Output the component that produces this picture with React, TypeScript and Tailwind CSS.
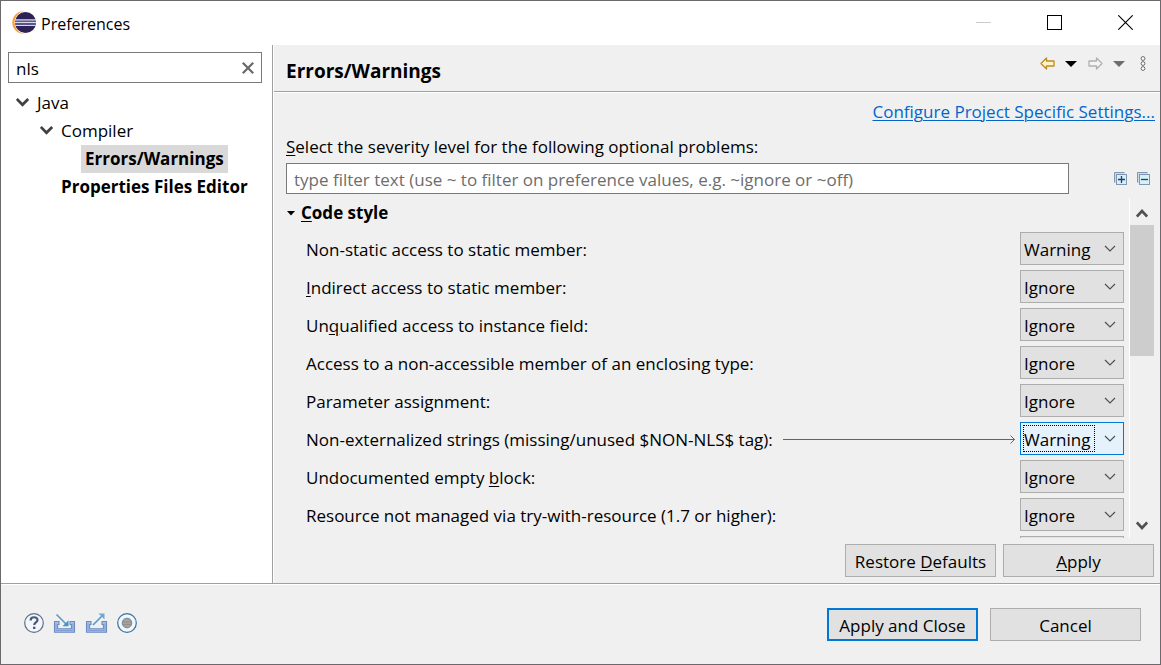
import { useState, type ReactNode } from "react";

type Severity = "Error" | "Warning" | "Info" | "Ignore";

interface Problem {
  id: string;
  label?: ReactNode;
  name?: string;
  severity: Severity;
  focused?: boolean;
}

const problems: Problem[] = [
  { id: "static", label: "Non-static access to static member:", severity: "Warning" },
  { id: "indirect", label: <><Mnemonic>I</Mnemonic>ndirect access to static member:</>, severity: "Ignore" },
  { id: "unqualified", label: <>Un<Mnemonic>q</Mnemonic>ualified access to instance field:</>, severity: "Ignore" },
  { id: "enclosing", label: "Access to a non-accessible member of an enclosing type:", severity: "Ignore" },
  { id: "parameter", label: "Parameter assignment:", severity: "Ignore" },
  { id: "nls", label: "Non-externalized strings (missing/unused $NON-NLS$ tag):", severity: "Warning", focused: true },
  { id: "empty", label: <>Undocumented empty <Mnemonic>b</Mnemonic>lock:</>, severity: "Ignore" },
  { id: "resource", label: "Resource not managed via try-with-resource (1.7 or higher):", severity: "Ignore" },
  { id: "catch", name: "Hidden catch block", severity: "Ignore" },
];

function Mnemonic({ children }: { children: ReactNode }) {
  return <span className="underline decoration-1 underline-offset-2">{children}</span>;
}

function EclipseLogo() {
  return (
    <svg width="24" height="24" viewBox="0 0 24 24" aria-hidden="true">
      <circle cx="11.600" cy="11.500" r="11.300" fill="#f9a03c" />
      <circle cx="14" cy="11.500" r="11.400" fill="#fff" />
      <circle cx="13.500" cy="11.500" r="10.500" fill="#2c2255" />
      <path d="M3.200 9h20.600M3 11.700h21M3.200 14.400h20.600" stroke="#dad8e8" strokeWidth="1.300" />
      <path d="M3 10.400h21M3 13.100h21" stroke="#5d5a96" strokeWidth="1.100" />
    </svg>
  );
}

function TreeChevron() {
  return (
    <svg width="14" height="10" viewBox="0 0 14 10" aria-hidden="true">
      <path d="M.8 1 6.500 6.800 12.200 1" fill="none" stroke="#404040" strokeWidth="2.700" />
    </svg>
  );
}

function HistoryArrow({ stroke, fill, flip }: { stroke: string; fill: string; flip?: boolean }) {
  return (
    <svg width="15" height="13" viewBox="0 0 15 13" aria-hidden="true">
      <path
        d={flip ? "M14 6.500 8.500 1v3H1v5h7.500v3Z" : "M1 6.500 6.500 1v3H14v5H6.500v3Z"}
        fill={fill}
        stroke={stroke}
        strokeWidth="1.300"
        strokeLinejoin="round"
      />
    </svg>
  );
}

function Triangle({ color }: { color: string }) {
  return (
    <svg width="12" height="6" viewBox="0 0 12 6" aria-hidden="true">
      <path d="M0 0h12L6 6Z" fill={color} />
    </svg>
  );
}

function TreeToggleIcon({ plus }: { plus?: boolean }) {
  return (
    <svg width="13" height="13" viewBox="0 0 13 13" aria-hidden="true">
      <path d="M.5 10.500V.5h10" fill="none" stroke="#8296b4" />
      <path d="M1 1h10v1H2v9H1Z" fill="#c9dcea" />
      <rect x="2.500" y="2.500" width="10" height="10" fill="#d8eff5" stroke="#8296b4" />
      <path d={plus ? "M4 7.500h7M7.500 4v7" : "M4 7.500h7"} stroke="#12447c" strokeWidth="1.300" />
    </svg>
  );
}

function ScrollChevron({ up }: { up?: boolean }) {
  return (
    <svg width="12" height="9" viewBox="0 0 12 9" aria-hidden="true">
      <path d={up ? "M.8 7.500 6 2l5.200 5.500" : "M.8 1.500 6 7l5.200-5.500"} fill="none" stroke="#505050" strokeWidth="2.700" />
    </svg>
  );
}

function TrayIcon({ out }: { out?: boolean }) {
  return (
    <svg width="23" height="20" viewBox="0 0 23 20" aria-hidden="true">
      <path
        d="M1.500 8.500H6v3H4.600v4.200h13.800v-4.200H17v-3h4.500v10.800h-20Z"
        fill="#a9bfe3"
        stroke="#6b8cc4"
        strokeWidth="1.100"
      />
      <path d="M3 10.500v7h17v-7" fill="none" stroke="#7f9bd0" strokeWidth=".9" />
      {out ? (
        <>
          <path d="M8 12 17.500 2.500" stroke="#5b9dcb" strokeWidth="1.700" />
          <path d="M13.500.5h6v6L17.500 4.500 15.500 2.500Z" fill="#6fa9d2" />
        </>
      ) : (
        <>
          <path d="M3.500 1.500 13.500 11.500" stroke="#5b9dcb" strokeWidth="1.700" />
          <path d="M9.500 13.300h6v-6l-2 2-2 2Z" fill="#4a91c4" />
        </>
      )}
    </svg>
  );
}

function HelpIcon() {
  return (
    <svg width="20" height="20" viewBox="0 0 20 20" aria-hidden="true">
      <circle cx="10" cy="10" r="9.300" fill="#f4f6f9" stroke="#5b6f8e" strokeWidth="1.200" />
      <path d="M6.600 7.400C6.600 3.200 13.500 3.300 13.500 7c0 2.400-3.300 2.500-3.300 5.100" fill="none" stroke="#47597f" strokeWidth="2.200" />
      <rect x="9" y="13.700" width="2.400" height="2.300" fill="#47597f" />
    </svg>
  );
}

function RecordIcon() {
  return (
    <svg width="20" height="20" viewBox="0 0 20 20" aria-hidden="true">
      <circle cx="10" cy="10" r="9.300" fill="#f1f7fc" stroke="#36719f" strokeWidth="1.200" />
      <circle cx="10" cy="10" r="4.800" fill="#a3a3a3" stroke="#858585" />
      <path d="M6 9h8M6 11.500h8" stroke="#8c8c8c" strokeWidth=".8" />
    </svg>
  );
}

function PushButton({ children, primary }: { children: ReactNode; primary?: boolean }) {
  return (
    <button
      type="button"
      className={
        primary
          ? "h-[33px] w-[151px] border-2 border-[#0078d7] bg-[#e1e1e1] pt-[2px]"
          : "h-[33px] w-[151px] border border-[#adadad] bg-[#e1e1e1] pt-[2px]"
      }
    >
      {children}
    </button>
  );
}

function ProblemRow({ problem }: { problem: Problem }) {
  const [value, setValue] = useState<Severity>(problem.severity);
  return (
    <div className="flex h-[33px] shrink-0 items-center">
      {problem.label && (
        <label htmlFor={problem.id} className="pt-[2px] whitespace-nowrap">
          {problem.label}
        </label>
      )}
      <div className="flex min-w-0 flex-1 items-center pt-px pr-[5px] pl-[10px]">
        {problem.focused && (
          <>
            <span className="h-px flex-1 bg-[#646464]" />
            <svg width="5" height="9" viewBox="0 0 5 9" aria-hidden="true">
              <path d="M.5.5l4 4-4 4M0 4.500h4.500" fill="none" stroke="#646464" />
            </svg>
          </>
        )}
      </div>
      <div className="relative h-[33px] w-[104px] shrink-0">
        <select
          id={problem.id}
          aria-label={problem.name}
          value={value}
          onChange={(e) => setValue(e.target.value as Severity)}
          className={
            problem.focused
              ? "size-full appearance-none border border-[#0078d7] bg-[#e5f1fb] pt-[2px] pl-[3px] outline-none"
              : "size-full appearance-none border border-[#adadad] bg-[#e1e1e1] pt-[2px] pl-[3px] outline-none"
          }
        >
          <option>Error</option>
          <option>Warning</option>
          <option>Info</option>
          <option>Ignore</option>
        </select>
        {problem.focused && (
          <span className="pointer-events-none absolute top-[3px] bottom-[3px] left-[3px] w-[72px] border border-dotted border-black" />
        )}
        <svg className="pointer-events-none absolute top-[13px] right-2" width="12" height="8" viewBox="0 0 12 8" aria-hidden="true">
          <path d="M1 1l5 5 5-5" fill="none" stroke="#505050" strokeWidth="1.200" />
        </svg>
      </div>
    </div>
  );
}

export default function App() {
  const [query, setQuery] = useState("nls");
  const [filter, setFilter] = useState("");

  return (
    <div className="flex h-screen flex-col border border-[#6b696b] bg-[#f0f0f0] font-['Open_Sans','Noto_Sans',sans-serif] text-[17px] leading-6 text-black">
      <header className="flex h-11 shrink-0 items-center bg-white pr-[27px] pl-[11px]">
        <EclipseLogo />
        <h1 className="flex-1 pt-px pl-[5px] text-base">Preferences</h1>
        <div className="flex items-center gap-14 pb-px">
          <button type="button" aria-label="Minimize" disabled>
            <svg width="15" height="15" viewBox="0 0 15 15"><path d="M0 7.500h15" stroke="#cccccc" /></svg>
          </button>
          <button type="button" aria-label="Maximize">
            <svg width="15" height="15" viewBox="0 0 15 15"><rect x=".5" y=".5" width="14" height="14" fill="none" stroke="#000" /></svg>
          </button>
          <button type="button" aria-label="Close">
            <svg width="15" height="15" viewBox="0 0 15 15"><path d="M.3.3l14.400 14.400m0-14.400L.3 14.700" stroke="#000" strokeWidth="1.100" /></svg>
          </button>
        </div>
      </header>

      <div className="flex min-h-0 flex-1">
        <nav className="w-[272px] shrink-0 border-r border-[#a0a0a0] bg-white pt-[7px] pr-[10px] pl-[7px]">
          <div className="flex h-[31px] items-center border border-[#7a7a7a] pr-[7px] pl-[7px]">
            <input
              aria-label="Search preferences"
              value={query}
              onChange={(e) => setQuery(e.target.value)}
              className="min-w-0 flex-1 bg-transparent pt-[2px] outline-none"
            />
            <button type="button" aria-label="Clear search" onClick={() => setQuery("")}>
              <svg width="12" height="12" viewBox="0 0 12 12"><path d="M.8.8l10.400 10.400M11.200.8.8 11.200" stroke="#696969" strokeWidth="2.200" /></svg>
            </button>
          </div>
          <ul className="pt-[6px]">
            <li>
              <div className="flex h-7 items-center gap-[7px] pl-2"><TreeChevron />Java</div>
              <ul>
                <li>
                  <div className="flex h-7 items-center gap-[7px] pl-8"><TreeChevron />Compiler</div>
                  <ul>
                    <li className="flex h-7 pl-[73px]">
                      <a href="#errors" className="flex items-center bg-[#d9d9d9] px-1 font-bold">Errors/Warnings</a>
                    </li>
                  </ul>
                </li>
                <li className="flex h-7 items-center pl-[53px]">
                  <a href="#properties" className="font-bold whitespace-nowrap">Properties Files Editor</a>
                </li>
              </ul>
            </li>
          </ul>
        </nav>

        <main className="flex min-w-0 flex-1 flex-col border-l border-white">
          <div className="flex h-[47px] shrink-0 items-center border-b border-[#a0a0a0] pr-[14px] pl-3">
            <h2 className="flex-1 pt-[5px] text-[19px] font-bold">Errors/Warnings</h2>
            <div className="flex items-center pb-[9px]">
              <button type="button" aria-label="Back"><HistoryArrow stroke="#c08a1e" fill="#fff6c8" /></button>
              <button type="button" aria-label="Back history" className="ml-[10px]"><Triangle color="#000000" /></button>
              <button type="button" aria-label="Forward" className="ml-[11px]"><HistoryArrow stroke="#b0b0b0" fill="#f4f4f4" flip /></button>
              <button type="button" aria-label="Forward history" className="ml-[10px]"><Triangle color="#6d6d6d" /></button>
              <button type="button" aria-label="View menu" className="ml-[15px]">
                <svg width="6" height="15" viewBox="0 0 6 15">
                  <g fill="#fff" stroke="#6a6a6a"><circle cx="3" cy="2.500" r="1.900" /><circle cx="3" cy="7.500" r="1.900" /><circle cx="3" cy="12.500" r="1.900" /></g>
                </svg>
              </button>
            </div>
          </div>

          <div className="flex min-h-0 flex-1 flex-col border-t border-white pr-[5px] pl-3">
            <div className="flex h-[38px] shrink-0 items-center justify-end">
              <a href="#project" className="text-[#0066cc] underline decoration-1 underline-offset-2">Configure Project Specific Settings...</a>
            </div>
            <label htmlFor="filter" className="flex h-8 shrink-0 items-center whitespace-pre">
              <span><Mnemonic>S</Mnemonic>elect the severity level for the following optional problems:</span>
            </label>
            <div className="flex shrink-0 items-center pr-[5px]">
              <input
                id="filter"
                value={filter}
                onChange={(e) => setFilter(e.target.value)}
                placeholder="type filter text (use ~ to filter on preference values, e.g. ~ignore or ~off)"
                className="h-[31px] min-w-0 flex-1 border border-[#7a7a7a] bg-white px-[7px] pt-[2px] outline-none placeholder:text-[#6d6d6d]"
              />
              <button type="button" aria-label="Expand all" className="ml-[45px]"><TreeToggleIcon plus /></button>
              <button type="button" aria-label="Collapse all" className="ml-[10px]"><TreeToggleIcon /></button>
            </div>

            <div className="mt-1 flex min-h-0 flex-1">
              <section className="flex min-w-0 flex-1 flex-col overflow-hidden border-r border-white pr-[5px]">
                <h3 className="flex h-[34px] shrink-0 items-center gap-[6px] pb-1 font-bold">
                  <svg width="9" height="5" viewBox="0 0 9 5" aria-hidden="true"><path d="M1 0h8L5 4.500Z" fill="#000" /></svg>
                  <span><Mnemonic>C</Mnemonic>ode style</span>
                </h3>
                <div className="flex flex-col gap-[5px] pl-5">
                  {problems.map((p) => (
                    <ProblemRow key={p.id} problem={p} />
                  ))}
                </div>
              </section>
              <div className="mr-px flex w-6 shrink-0 flex-col items-center justify-between">
                <button type="button" aria-label="Scroll up" className="flex h-[27px] items-center pt-1"><ScrollChevron up /></button>
                <div className="min-h-0 w-full flex-1"><div className="h-[131px] max-h-full w-full bg-[#cdcdcd]" /></div>
                <button type="button" aria-label="Scroll down" className="flex h-[25px] items-center"><ScrollChevron /></button>
              </div>
            </div>

            <div className="flex shrink-0 justify-end gap-[7px] pt-[6px] pr-px pb-[6px]">
              <PushButton><span>Restore <Mnemonic>D</Mnemonic>efaults</span></PushButton>
              <PushButton><span><Mnemonic>A</Mnemonic>pply</span></PushButton>
            </div>
          </div>
        </main>
      </div>

      <footer className="shrink-0 border-t border-[#a0a0a0]">
        <div className="flex h-20 items-center border-t border-white pr-[19px] pl-[23px]">
          <div className="flex flex-1 items-center gap-[9px] pb-1">
            <button type="button" aria-label="Help"><HelpIcon /></button>
            <button type="button" aria-label="Import preferences"><TrayIcon /></button>
            <button type="button" aria-label="Export preferences"><TrayIcon out /></button>
            <button type="button" aria-label="Oomph recorder"><RecordIcon /></button>
          </div>
          <div className="flex gap-3">
            <PushButton primary>Apply and Close</PushButton>
            <PushButton>Cancel</PushButton>
          </div>
        </div>
      </footer>
    </div>
  );
}
